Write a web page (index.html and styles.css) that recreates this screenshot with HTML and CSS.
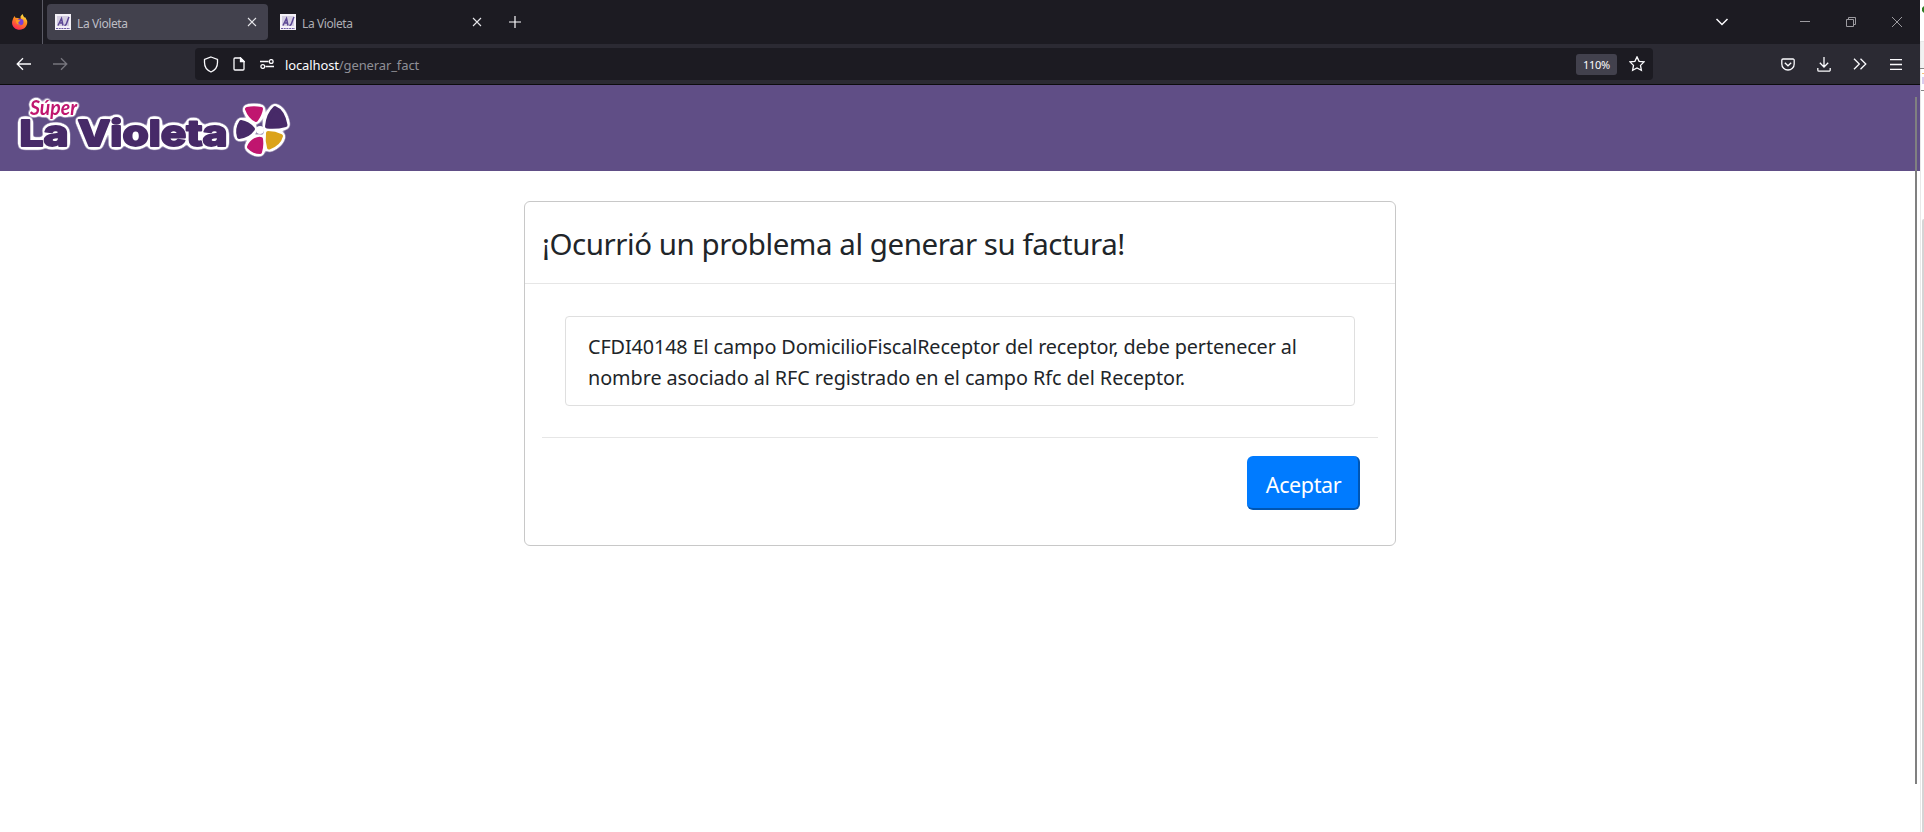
FILE: index.html
```html
<!DOCTYPE html>
<html lang="es">
<head>
<meta charset="utf-8">
<title>La Violeta</title>
<link rel="stylesheet" href="styles.css">
</head>
<body>
<div class="screen">
<div class="window">
  <div class="tabbar">
    <div class="fx">
      <svg width="16" height="16" viewBox="0 0 16 16"><defs><linearGradient id="fx" x1="0.8" y1="0" x2="0.3" y2="1"><stop offset="0" stop-color="#fff04a"/><stop offset=".45" stop-color="#ff8a1e"/><stop offset="1" stop-color="#ff2356"/></linearGradient></defs><path d="M1.2 4.2 2.6 2l.8 1.7 2.4.4L8.600 5 8.500 2.500 10.400 0l1.700 3.200 1.300.3 1.700 3.200c1 4.600-2.400 9.100-7.300 9.100-4.900 0-8.500-4.200-7.600-8.500z" fill="url(#fx)"/><circle cx="8.300" cy="8" r="3.200" fill="#7a3fd8"/><path d="M4 6.200c2-1 3-.2 4.300.2-.3 1.200-2 1-2 2.300 0 1 1.200 1.400 2.400 1.200-2 1.700-4.900.3-4.700-3.700z" fill="#ff9a22"/></svg>
    </div>
    <div class="tab active">
      <svg class="fav" width="16" height="16" viewBox="0 0 16 16"><path fill="#f4f1f8" d="M0 0h16v16H0z"/><path fill="#d5cfe2" d="M2 2h12v10H2z"/><path d="m3 11.500 3.500-7 1.500 7M5 9h3M9.500 11c2 1 2.500-4 4.500-8" fill="none" stroke="#5b4694" stroke-width="1.500"/><path d="M1 14.500h14" stroke="#6d5aa2" stroke-width="1.200" stroke-dasharray="2 .7"/></svg>
      <span class="tabtext">La Violeta</span>
      <svg class="x" width="10" height="10" viewBox="0 0 10 10"><path d="m1 1 8 8M9 1 1 9"/></svg>
    </div>
    <div class="tab">
      <svg class="fav" width="16" height="16" viewBox="0 0 16 16"><path fill="#f4f1f8" d="M0 0h16v16H0z"/><path fill="#d5cfe2" d="M2 2h12v10H2z"/><path d="m3 11.500 3.500-7 1.500 7M5 9h3M9.500 11c2 1 2.500-4 4.500-8" fill="none" stroke="#5b4694" stroke-width="1.500"/><path d="M1 14.500h14" stroke="#6d5aa2" stroke-width="1.200" stroke-dasharray="2 .7"/></svg>
      <span class="tabtext">La Violeta</span>
      <svg class="x" width="10" height="10" viewBox="0 0 10 10"><path d="m1 1 8 8M9 1 1 9"/></svg>
    </div>
    <svg class="plus" width="12" height="12" viewBox="0 0 12 12"><path d="M6 0v12M0 6h12"/></svg>
    <div class="controls">
      <svg class="chev" width="14" height="8" viewBox="0 0 14 8"><path d="m1.500 1 5.500 5.500L12.500 1"/></svg>
      <svg class="min" width="10" height="10" viewBox="0 0 10 10"><path d="M0 4.500h10"/></svg>
      <svg class="max" width="10" height="10" viewBox="0 0 10 10"><path d="M.5 2.500h7v7h-7zM2.500 2.500v-2h7v7h-2"/></svg>
      <svg class="cls" width="10" height="10" viewBox="0 0 10 10"><path d="m0 0 10 10M10 0 0 10"/></svg>
    </div>
  </div>
  <div class="toolbar">
    <svg class="back" width="16" height="14" viewBox="0 0 16 14"><path d="M15 7H1.500M7 1.200 1.200 7 7 12.800"/></svg>
    <svg class="fwd" width="16" height="14" viewBox="0 0 16 14"><path d="M1 7h13.500M9 1.200 14.800 7 9 12.800"/></svg>
    <div class="urlbar">
      <svg class="shield" width="16" height="17" viewBox="0 0 16 17"><path d="M8 1 14.500 3.400v3.200c0 4-2 7.600-6.500 9.400C3.500 14.200 1.500 10.600 1.500 6.600V3.400z"/></svg>
      <svg class="page" width="12" height="14" viewBox="0 0 12 14"><path d="M2 1h5.500L11 4.500V12a1 1 0 0 1-1 1H2a1 1 0 0 1-1-1V2a1 1 0 0 1 1-1z"/><path d="M7.500 1v3.500H11z" fill="#fbfbfe"/></svg>
      <svg class="perm" width="14" height="10" viewBox="0 0 14 10"><path d="M0 2.500h8.500M5.500 7.500H14"/><circle cx="11.200" cy="2.500" r="1.900"/><circle cx="2.800" cy="7.500" r="1.900"/></svg>
      <span class="url">localhost<span class="path">/generar_fact</span></span>
      <span class="zoom">110%</span>
      <svg class="star" width="16" height="16" viewBox="0 0 16 16"><path d="m8 .9 2.100 4.400 4.900.6-3.500 3.500.9 4.900L8 12l-4.400 2.300.9-4.900L1 5.900l4.900-.6z"/></svg>
    </div>
    <svg class="pocket" width="14" height="13" viewBox="0 0 14 13"><path d="M2 1h10a1.200 1.200 0 0 1 1.200 1.200V6c0 3.500-2.800 6-6.200 6S.8 9.500.8 6V2.200A1.200 1.200 0 0 1 2 1zM3.800 4.800 7 7.800l3.200-3"/></svg>
    <svg class="down" width="14" height="15" viewBox="0 0 14 15"><path d="M7 0v10M2.800 5.800 7 10l4.200-4.200M.8 11v2a1.200 1.200 0 0 0 1.200 1.200h10a1.200 1.200 0 0 0 1.200-1.200v-2"/></svg>
    <svg class="more" width="14" height="12" viewBox="0 0 14 12"><path d="m1 .7 5.300 5.300L1 11.300M7.500.7 12.800 6l-5.300 5.300"/></svg>
    <svg class="menu" width="12" height="11" viewBox="0 0 12 11"><path d="M0 .5h12M0 5.500h12M0 10.500h12"/></svg>
  </div>
  <header class="brand">
    <svg class="logo" width="290" height="66" viewBox="10 94 290 66">
      <defs>
        <filter id="outline" filterUnits="userSpaceOnUse" x="8" y="88" width="300" height="78" color-interpolation-filters="sRGB">
          <feGaussianBlur in="SourceAlpha" stdDeviation="2.2"/>
          <feComponentTransfer><feFuncR type="linear" slope="0" intercept="1"/><feFuncG type="linear" slope="0" intercept="1"/><feFuncB type="linear" slope="0" intercept="1"/><feFuncA type="linear" slope="10" intercept="-.4"/></feComponentTransfer>
          <feMerge><feMergeNode/><feMergeNode in="SourceGraphic"/></feMerge>
        </filter>
      </defs>
      <text class="wordmark" x="19.500" y="146" textLength="208" lengthAdjust="spacingAndGlyphs" filter="url(#outline)">La Violeta</text>
      <g class="petals" filter="url(#outline)">
        <path class="pink" d="M247 109q7-1.500 14 0-1 6-5 11-6-3-9-11z"/>
        <path class="plum" d="M275 108q8 3 10.500 17-9 2.500-18.500 1.500 1-12 8-18.500z"/>
        <path class="plum" d="M241 122q7 1 12 7-5 7-14 8-2.500-8 2-15z"/>
        <path class="gold" d="M268 133q7 0 13 3-2 8-12 11.500-2-7-1-14.500z"/>
        <path class="pink" d="M255 140q4-2 6-1 1 7-1 13-6 0-11-5 2-5 6-7z"/>
      </g>
      <circle cx="260" cy="130" r="4" fill="#fff"/>
      <text class="super" x="30" y="115" textLength="47" lengthAdjust="spacingAndGlyphs" filter="url(#outline)">Súper</text>
    </svg>
  </header>
  <main class="content">
    <section class="card">
      <h1 class="title">¡Ocurrió un problema al generar su factura!</h1>
      <div class="body">
        <div class="message"><span class="line">CFDI40148 El campo DomicilioFiscalReceptor del receptor, debe pertenecer al</span><br>nombre asociado al RFC registrado en el campo Rfc del Receptor.</div>
        <div class="actions"><button class="accept">Aceptar</button></div>
      </div>
    </section>
  </main>
  <div class="scroll"></div>
</div>
<aside class="edge">
  <svg width="4" height="832" viewBox="0 0 4 832"><path fill="#fff" d="M0 0h4v832H0z"/><path fill="#e8e8e8" d="M0 41h1v791H0zM1 41h3v1H1z"/><path fill="#f1f1f1" d="M1 42h3v26H1z"/><path fill="#858585" d="M0 68h4v1H0zM1 90h3v1H1z"/><path fill="#2e7d22" d="M2 8l2-2v7l-2-2z"/><path fill="#f9c078" d="M2 73h2v1H2z"/><path fill="#d9cdee" d="M2 77h2v7H2z"/><path fill="#d5d5d5" d="M4 219q-2 0-2 2v611h2z"/></svg>
</aside>
</div>
</body>
</html>
```
FILE: styles.css
```css
* { box-sizing: border-box; }
body { margin: 0; background: #fff; font-family: "Noto Sans", sans-serif; color: #212529; }
svg { display: block; flex: none; fill: none; }
.screen { display: flex; width: 1924px; height: 832px; overflow: hidden; }
.window { position: relative; width: 1920px; }
.tabbar { display: flex; align-items: center; height: 44px; background: #1c1b22; }
.fx { display: flex; align-items: center; width: 43px; height: 44px; padding-left: 12px; border-right: 1px solid #5b5b66; }
.tab { display: flex; align-items: center; width: 221px; height: 36px; margin-left: 4px; padding: 0 11px 0 8px; border-radius: 4px; color: #aeaeb4; font-size: 12px; }
.active { background: #42414d; color: #bdbdc4; }
.tabtext { flex: 1; margin-left: 6px; letter-spacing: -.4px; padding-top: 2px; }
.x { stroke: #e6e6ea; stroke-width: 1.100; }
.plus { margin-left: 16px; stroke: #fbfbfe; stroke-width: 1.200; }
.controls { display: flex; align-items: center; margin-left: auto; padding-right: 18px; stroke: #9c9ba0; }
.chev { margin-right: 71px; stroke: #fbfbfe; stroke-width: 1.500; }
.min, .max { margin-right: 36px; }
.toolbar { display: flex; align-items: center; height: 41px; background: #2b2a33; border-bottom: 1px solid #0c0c0d; stroke: #fbfbfe; stroke-width: 1.300; }
.back { margin-left: 16px; }
.fwd { margin-left: 20px; stroke: #77767e; }
.urlbar { display: flex; align-items: center; width: 1458px; height: 32px; margin-left: 127px; padding: 0 8px; border-radius: 4px; background: #1c1b22; }
.page { margin-left: 14px; }
.perm { margin-left: 15px; }
.url { margin-left: 11px; padding-top: 1px; color: #fbfbfe; font-size: 13px; letter-spacing: -.12px; }
.path { color: #8f8f96; }
.zoom { margin-left: auto; width: 41px; height: 21px; border-radius: 3px; background: #42414d; color: #fbfbfe; font-size: 11px; line-height: 22px; letter-spacing: -.3px; text-align: center; }
.star { margin-left: 12px; }
.pocket { margin-left: 128px; }
.down { margin-left: 22px; }
.more { margin-left: 22px; }
.menu { margin-left: 23px; }
.brand { height: 86px; padding: 9px 0 0 10px; background: #604e86; }
.wordmark { font-family: Inter, sans-serif; font-weight: 800; font-size: 35.500px; fill: #472a68; stroke: #472a68; stroke-width: 1.800; stroke-linejoin: round; }
.petals { stroke-width: 4; stroke-linejoin: round; }
.pink { fill: #c0166f; stroke: #c0166f; }
.plum { fill: #472a68; stroke: #472a68; }
.gold { fill: #dba31b; stroke: #dba31b; }
.super { font-family: Lato, sans-serif; font-style: italic; font-weight: 700; font-size: 20px; fill: #c0166f; }
.content { display: flex; justify-content: center; padding-top: 30px; }
.card { width: 872px; height: 345px; border: 1px solid #c8c8c8; border-radius: 6px; }
.title { height: 82px; margin: 0; padding: 20px 17px; border-bottom: 1px solid #e6e6e6; font-size: 29.500px; font-weight: 400; line-height: 44px; white-space: nowrap; letter-spacing: -.45px; }
.body { padding: 32px 17px 0; }
.message { height: 90px; margin: 0 23px; padding: 14px 22px; border: 1px solid #dfdfdf; border-radius: 4px; font-size: 19.800px; line-height: 31px; letter-spacing: -.05px; white-space: nowrap; }
.line { letter-spacing: -.1px; }
.actions { display: flex; justify-content: flex-end; margin-top: 31px; padding: 18px 18px 0 0; border-top: 1px solid #e6e6e6; }
.accept { width: 113px; height: 54px; padding: 4px 0 0 2px; border: 0 solid #0056b3; border-width: 0 2px 2px 0; border-radius: 6px; background: #007bff; color: #fff; font: 21.500px "Noto Sans", sans-serif; letter-spacing: -.4px; }
.scroll { position: absolute; right: 3px; top: 97px; width: 2px; height: 687px; background: #808080; }
.edge { width: 4px; }
```
